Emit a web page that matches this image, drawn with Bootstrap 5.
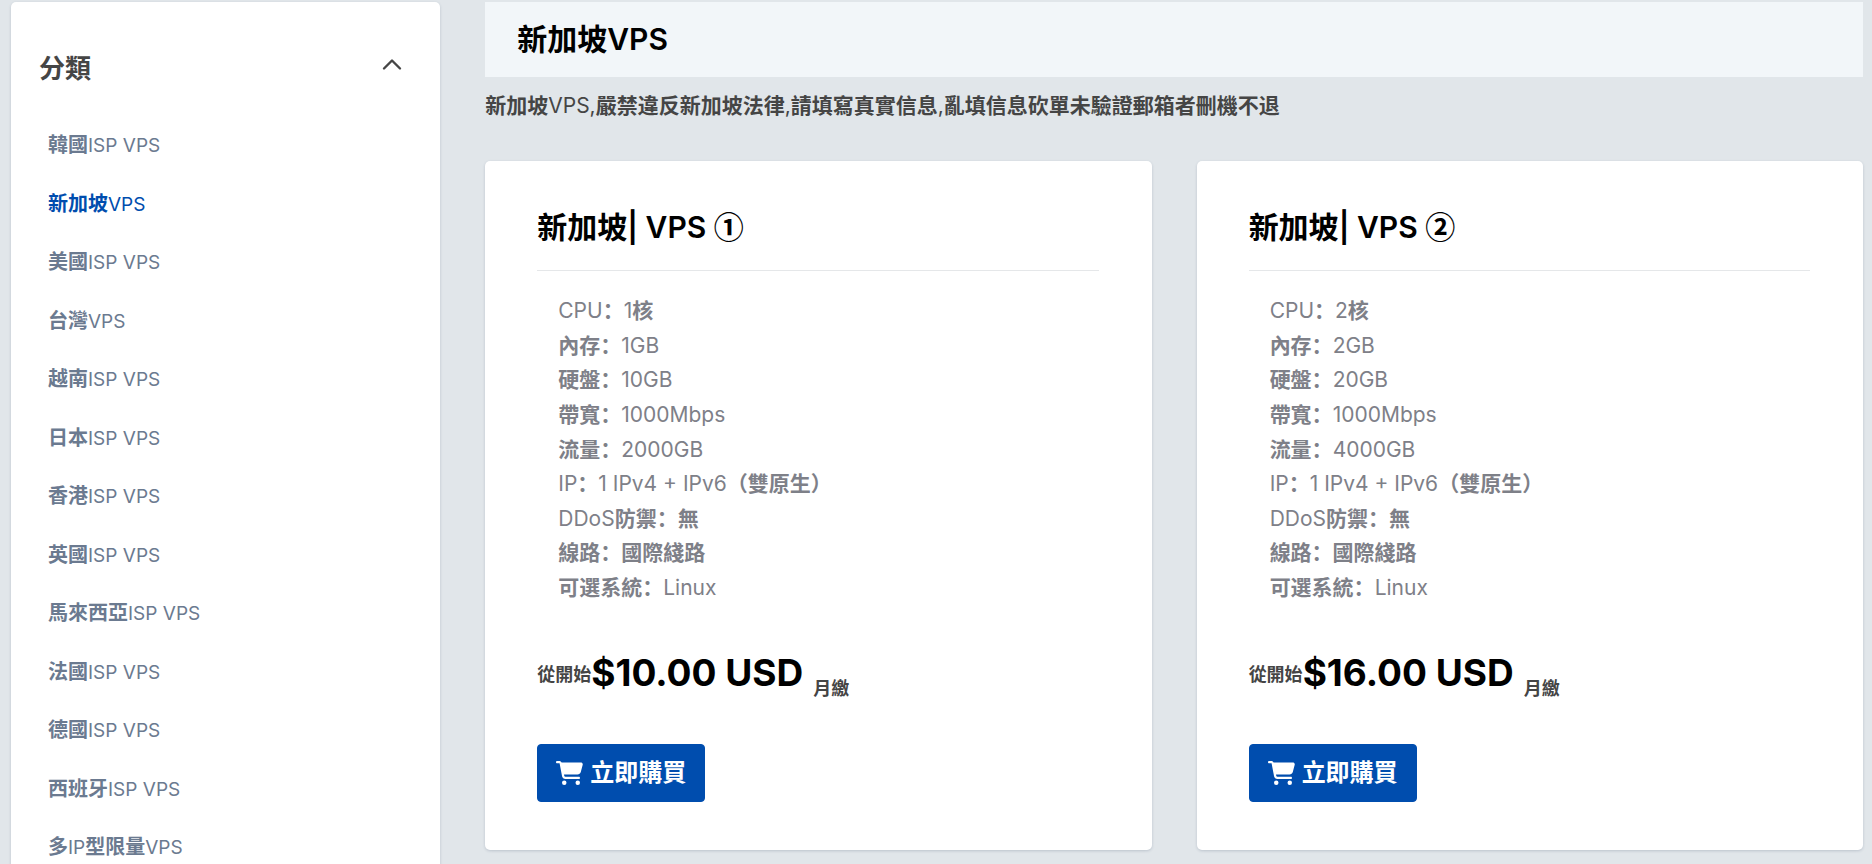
<!DOCTYPE html>
<html lang="zh">
<head>
<meta charset="utf-8">
<meta name="viewport" content="width=device-width, initial-scale=1">
<title>新加坡VPS</title>
<link href="https://cdn.jsdelivr.net/npm/bootstrap@5.3.0/dist/css/bootstrap.min.css" rel="stylesheet">
<style>
  body { background: #e1e6ea; color: #454545; font-family: Inter, "Noto Sans CJK SC", sans-serif; font-size: 21px; height: 100vh; overflow: hidden; }
  b { font-family: "Noto Sans CJK SC", sans-serif; font-weight: 700; line-height: 1; }
  .page { padding: 2px 9px 0 11px; }
  .page-row { --bs-gutter-x: 45px; }
  .panel { background: #fff; border-radius: 5px; box-shadow: 0 1px 3px rgba(40, 60, 90, .2); }
  .side-head { padding: 47px 37px 28px 28px; }
  .side-title { font-size: 26px; line-height: 40px; }
  .side-toggle { color: #454545; line-height: 1; }
  .side-link { font-size: 19px; line-height: 1.5; padding: 15px 37px; color: #6b7a90; text-decoration: none; }
  .side-link b { font-size: 20px; }
  .side-link.active { color: #004dae; }
  .page-head { background: #f2f6f9; padding: 15px 32px; }
  .title { font-size: 30px; line-height: 45px; font-weight: 600; color: #000; }
  .note { line-height: 32px; margin: 13px 0 39px; }
  .plan { padding: 44px 53px 48px 52px; }
  .plan .title { padding-bottom: 20px; border-bottom: 1px solid #e5e7e9; }
  .specs { color: #7e8088; line-height: 1.65; padding: 23px 21px 0; margin-bottom: 37px; }
  .price-row { line-height: 60px; margin-bottom: 41px; font-size: 18px; }
  .price-row b { line-height: 60px; }
  .price { font-size: 37px; font-weight: 700; color: #000; }
  .period { padding: 14px 0 0 10px; height: 60px; }
  .buy { --bs-btn-bg: #004dae; --bs-btn-border-color: #004dae; --bs-btn-hover-bg: #003f90; --bs-btn-color: #fff; --bs-btn-hover-color: #fff; --bs-btn-border-radius: 4px; font-size: 24px; font-weight: 700; line-height: 36px; padding: 10px 18px; gap: 7px; }
</style>
</head>
<body>
<div class="container-fluid page">
  <div class="row page-row">
    <aside class="col-3">
      <div class="panel">
        <div class="side-head d-flex justify-content-between align-items-center">
          <h2 class="side-title m-0"><b>分類</b></h2>
          <button type="button" class="side-toggle btn p-0 border-0" data-bs-toggle="collapse" data-bs-target="#categories" aria-label="分類">
            <svg width="22" height="22" viewBox="0 0 22 22" fill="none" stroke="currentColor" stroke-width="2.400" stroke-linecap="round" stroke-linejoin="round"><path d="M3 10.500L11 2.500L19 10.500"/></svg>
          </button>
        </div>
        <nav id="categories" class="collapse show">
          <div class="d-flex flex-column">
            <a href="#" class="side-link"><b>韓國</b>ISP VPS</a>
            <a href="#" class="side-link active"><b>新加坡</b>VPS</a>
            <a href="#" class="side-link"><b>美國</b>ISP VPS</a>
            <a href="#" class="side-link"><b>台灣</b>VPS</a>
            <a href="#" class="side-link"><b>越南</b>ISP VPS</a>
            <a href="#" class="side-link"><b>日本</b>ISP VPS</a>
            <a href="#" class="side-link"><b>香港</b>ISP VPS</a>
            <a href="#" class="side-link"><b>英國</b>ISP VPS</a>
            <a href="#" class="side-link"><b>馬來西亞</b>ISP VPS</a>
            <a href="#" class="side-link"><b>法國</b>ISP VPS</a>
            <a href="#" class="side-link"><b>德國</b>ISP VPS</a>
            <a href="#" class="side-link"><b>西班牙</b>ISP VPS</a>
            <a href="#" class="side-link"><b>多</b>IP<b>型限量</b>VPS</a>
          </div>
        </nav>
      </div>
    </aside>
    <main class="col-9">
      <header class="page-head"><h1 class="title m-0"><b>新加坡</b>VPS</h1></header>
      <p class="note"><b>新加坡</b>VPS,<b>嚴禁違反新加坡法律</b>,<b>請填寫真實信息</b>,<b>亂填信息砍單未驗證郵箱者刪機不退</b></p>
      <div class="row page-row">
        <div class="col-6">
          <article class="panel plan">
            <h2 class="title m-0"><b>新加坡</b>| VPS <b>①</b></h2>
            <ul class="specs list-unstyled">
              <li>CPU<b>：</b>1<b>核</b></li>
              <li><b>內存：</b>1GB</li>
              <li><b>硬盤：</b>10GB</li>
              <li><b>帶寬：</b>1000Mbps</li>
              <li><b>流量：</b>2000GB</li>
              <li>IP<b>：</b>1 IPv4 + IPv6<b>（雙原生）</b></li>
              <li>DDoS<b>防禦：無</b></li>
              <li><b>線路：國際綫路</b></li>
              <li><b>可選系統：</b>Linux</li>
            </ul>
            <div class="price-row d-flex"><b>從開始</b><span class="price">$10.00 USD</span><b class="period">月繳</b></div>
            <button type="button" class="btn buy d-inline-flex align-items-center">
              <svg width="27" height="24" viewBox="0 0 576 512" fill="currentColor" aria-hidden="true"><path d="M0 24C0 10.700 10.700 0 24 0H69.500c22 0 41.500 12.800 50.600 32h411c26.300 0 45.500 25 38.600 50.400l-41 152.300c-8.500 31.400-37 53.300-69.500 53.300H170.700l5.400 28.500c2.200 11.300 12.100 19.500 23.600 19.500H488c13.300 0 24 10.700 24 24s-10.700 24-24 24H199.700c-34.600 0-64.300-24.600-70.700-58.500L77.400 54.500c-.7-3.800-4-6.500-7.900-6.500H24C10.700 48 0 37.300 0 24zM128 464a48 48 0 1 1 96 0 48 48 0 1 1-96 0zm336-48a48 48 0 1 1 0 96 48 48 0 1 1 0-96z"/></svg>
              立即購買
            </button>
          </article>
        </div>
        <div class="col-6">
          <article class="panel plan">
            <h2 class="title m-0"><b>新加坡</b>| VPS <b>②</b></h2>
            <ul class="specs list-unstyled">
              <li>CPU<b>：</b>2<b>核</b></li>
              <li><b>內存：</b>2GB</li>
              <li><b>硬盤：</b>20GB</li>
              <li><b>帶寬：</b>1000Mbps</li>
              <li><b>流量：</b>4000GB</li>
              <li>IP<b>：</b>1 IPv4 + IPv6<b>（雙原生）</b></li>
              <li>DDoS<b>防禦：無</b></li>
              <li><b>線路：國際綫路</b></li>
              <li><b>可選系統：</b>Linux</li>
            </ul>
            <div class="price-row d-flex"><b>從開始</b><span class="price">$16.00 USD</span><b class="period">月繳</b></div>
            <button type="button" class="btn buy d-inline-flex align-items-center">
              <svg width="27" height="24" viewBox="0 0 576 512" fill="currentColor" aria-hidden="true"><path d="M0 24C0 10.700 10.700 0 24 0H69.500c22 0 41.500 12.800 50.600 32h411c26.300 0 45.500 25 38.600 50.400l-41 152.300c-8.500 31.400-37 53.300-69.500 53.300H170.700l5.400 28.500c2.200 11.300 12.100 19.500 23.600 19.500H488c13.300 0 24 10.700 24 24s-10.700 24-24 24H199.700c-34.600 0-64.300-24.600-70.700-58.500L77.400 54.500c-.7-3.800-4-6.500-7.900-6.500H24C10.700 48 0 37.300 0 24zM128 464a48 48 0 1 1 96 0 48 48 0 1 1-96 0zm336-48a48 48 0 1 1 0 96 48 48 0 1 1 0-96z"/></svg>
              立即購買
            </button>
          </article>
        </div>
      </div>
    </main>
  </div>
</div>
<script src="https://cdn.jsdelivr.net/npm/bootstrap@5.3.0/dist/js/bootstrap.bundle.min.js"></script>
</body>
</html>
